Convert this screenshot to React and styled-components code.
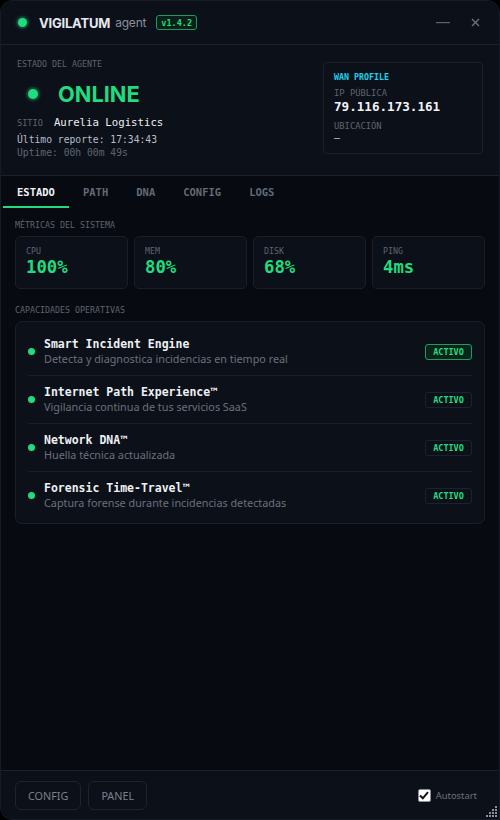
import React from "react";
import styled, { createGlobalStyle } from "styled-components";

const GlobalStyle = createGlobalStyle`
  html, body { margin: 0; padding: 0; background: #000; }
  body { font-family: "Noto Sans", sans-serif; }
  * { box-sizing: border-box; }
`;

const MONO = `"DejaVu Sans Mono", "Liberation Mono", monospace`;
const SANS = `"Noto Sans", "Open Sans", sans-serif`;
const INTER = `Inter, "Noto Sans", sans-serif`;
const GREEN = "#21dc7e";

const Window = styled.div`
  width: 500px;
  height: 820px;
  display: flex;
  flex-direction: column;
  background: #070a10;
  border: 1px solid #161b26;
  border-radius: 12px 12px 0 12px;
  overflow: hidden;
  position: relative;
`;

const TitleBar = styled.div`
  height: 44px;
  flex: none;
  display: flex;
  align-items: center;
  padding: 0 9px 0 17px;
  background: #0c1019;
  border-bottom: 1px solid #1b202c;
`;

const Led = styled.span`
  width: ${p => p.$size}px;
  height: ${p => p.$size}px;
  border-radius: 50%;
  background: ${GREEN};
  box-shadow: 0 0 0 ${p => p.$ring}px rgba(33, 220, 126, 0.18), 0 0 6px rgba(33, 220, 126, 0.35);
  flex: none;
`;

const Brand = styled.span`
  margin-left: 12px;
  font-family: ${INTER};
  font-weight: 700;
  font-size: 13px;
  letter-spacing: -0.2px;
  color: #e6e8ee;
`;

const BrandSub = styled.span`
  margin-left: 5px;
  font-family: ${INTER};
  font-weight: 400;
  font-size: 12px;
  letter-spacing: -0.2px;
  color: #8a909c;
`;

const Version = styled.span`
  margin-left: 10px;
  height: 15px;
  padding: 0 4px;
  display: flex;
  align-items: center;
  border: 1px solid #1c9a5c;
  border-radius: 3px;
  background: #0a1f17;
  font-family: ${MONO};
  font-weight: 700;
  font-size: 8.5px;
  color: ${GREEN};
`;

const Spacer = styled.div`
  flex: 1;
`;

const WinButton = styled.button`
  width: 30px;
  height: 30px;
  margin-left: 2px;
  border: 0;
  background: transparent;
  display: flex;
  align-items: center;
  justify-content: center;
  padding: 0;
  cursor: pointer;
`;

const Header = styled.div`
  height: 131px;
  flex: none;
  display: flex;
  justify-content: space-between;
  align-items: flex-start;
  padding: 13px 16px 0 16px;
  background: #0c1019;
  border-bottom: 1px solid #1b202c;
`;

const Column = styled.div`
  display: flex;
  flex-direction: column;
`;

const Caption = styled.div`
  font-family: ${MONO};
  font-size: ${p => p.$size || 8.3}px;
  line-height: 12px;
  color: #5d6471;
  text-transform: uppercase;
  margin-top: ${p => p.$mt || 0}px;
`;

const StatusRow = styled.div`
  margin-top: 10px;
  height: 28px;
  display: flex;
  align-items: center;
  padding-left: 11px;
`;

const StatusText = styled.span`
  margin-left: 20px;
  font-family: ${INTER};
  font-weight: 700;
  font-size: 21.8px;
  color: ${GREEN};
`;

const SiteRow = styled.div`
  margin-top: 9px;
  display: flex;
  align-items: baseline;
  gap: 11px;
  line-height: 12px;
`;

const SiteName = styled.span`
  font-family: ${MONO};
  font-size: 10.7px;
  color: #eceef2;
`;

const MonoLine = styled.div`
  font-family: ${MONO};
  font-size: 9.7px;
  line-height: 13px;
  color: ${p => (p.$dim ? "#5f6672" : "#b9bec8")};
  margin-top: ${p => p.$mt || 0}px;
`;

const WanCard = styled.div`
  margin-top: 4px;
  width: 160px;
  height: 92px;
  border: 1px solid #1b202c;
  border-radius: 4px;
  padding: 8px 10px;
  display: flex;
  flex-direction: column;
`;

const WanTitle = styled.div`
  font-family: ${MONO};
  font-weight: 700;
  font-size: 8.3px;
  line-height: 12px;
  color: #22cfe8;
`;

const IpValue = styled.div`
  font-family: ${MONO};
  font-weight: 700;
  font-size: 12.6px;
  line-height: 16px;
  color: #f1f3f6;
`;

const Dash = styled.div`
  font-family: ${MONO};
  font-size: 10px;
  line-height: 12px;
  color: #c3c7cf;
`;

const Tabs = styled.div`
  height: 32px;
  flex: none;
  display: flex;
  padding-left: 2px;
`;

const Tab = styled.div`
  padding: 1px 14px 0;
  display: flex;
  align-items: center;
  font-family: ${MONO};
  font-weight: 700;
  font-size: 10.5px;
  color: ${p => (p.$active ? "#f0f2f5" : "#626977")};
  border-bottom: 2px solid ${p => (p.$active ? GREEN : "transparent")};
`;

const Body = styled.div`
  flex: 1;
  padding: 11px 14px 0 14px;
  display: flex;
  flex-direction: column;
`;

const Metrics = styled.div`
  margin-top: 5px;
  display: grid;
  grid-template-columns: repeat(4, 1fr);
  gap: 6px;
`;

const MetricCard = styled.div`
  height: 53px;
  background: #0c1019;
  border: 1px solid #191e2a;
  border-radius: 5px;
  padding: 8px 10px;
`;

const MetricValue = styled.div`
  font-family: ${MONO};
  font-weight: 700;
  font-size: 17.3px;
  line-height: 20px;
  color: ${GREEN};
`;

const CapCard = styled.div`
  margin-top: 5px;
  background: #0c1019;
  border: 1px solid #191e2a;
  border-radius: 7px;
  padding: 6px 12px 4px 12px;
`;

const CapRow = styled.div`
  display: flex;
  align-items: center;
  padding: 9px 0;
  border-bottom: ${p => (p.$last ? "0" : "1px solid #191e2a")};
`;

const CapDot = styled.span`
  width: 7px;
  height: 7px;
  border-radius: 50%;
  background: ${GREEN};
  flex: none;
`;

const CapText = styled.div`
  margin-left: 9px;
  flex: 1;
  display: flex;
  flex-direction: column;
`;

const CapTitle = styled.div`
  font-family: ${MONO};
  font-weight: 700;
  font-size: 11.5px;
  line-height: 14px;
  color: #eef0f4;
`;

const CapDesc = styled.div`
  font-family: ${SANS};
  font-size: 10.8px;
  line-height: 15px;
  color: #6a717e;
`;

const Badge = styled.span`
  width: 47px;
  height: 16px;
  flex: none;
  display: flex;
  align-items: center;
  justify-content: center;
  border: 1px solid ${p => (p.$hl ? "#1f9d5f" : "#1b2130")};
  background: ${p => (p.$hl ? "#0a2419" : "transparent")};
  border-radius: 3px;
  font-family: ${MONO};
  font-weight: 700;
  font-size: 8.5px;
  color: ${GREEN};
`;

const Footer = styled.div`
  height: 49px;
  flex: none;
  display: flex;
  align-items: center;
  padding: 0 22px 0 14px;
  gap: 7px;
  background: #0c1019;
  border-top: 1px solid #1b202c;
`;

const FooterButton = styled.button`
  height: 29px;
  padding: 0 12px;
  background: transparent;
  border: 1px solid #1d2330;
  border-radius: 6px;
  font-family: ${SANS};
  font-size: 10.8px;
  color: #7b818d;
  cursor: pointer;
`;

const CheckLabel = styled.label`
  margin-left: auto;
  display: flex;
  align-items: center;
  gap: 5px;
  font-family: ${SANS};
  font-size: 9.4px;
  color: #6a717e;
`;

const CheckBox = styled.span`
  width: 13px;
  height: 13px;
  background: #fff;
  border: 1px solid #8a8f99;
  border-radius: 2px;
  display: flex;
  align-items: center;
  justify-content: center;
`;

const Grip = styled.svg`
  position: absolute;
  right: 2px;
  bottom: 2px;
`;

const capabilities = [
  ["Smart Incident Engine", "Detecta y diagnostica incidencias en tiempo real"],
  ["Internet Path Experience™", "Vigilancia continua de tus servicios SaaS"],
  ["Network DNA™", "Huella técnica actualizada"],
  ["Forensic Time-Travel™", "Captura forense durante incidencias detectadas"],
];

const metrics = [
  ["CPU", "100%"],
  ["MEM", "80%"],
  ["DISK", "68%"],
  ["PING", "4ms"],
];

const tabs = ["ESTADO", "PATH", "DNA", "CONFIG", "LOGS"];

export default function App() {
  return (
    <>
      <GlobalStyle />
      <Window>
        <TitleBar>
          <Led $size={9} $ring={2} />
          <Brand>VIGILATUM</Brand>
          <BrandSub>agent</BrandSub>
          <Version>v1.4.2</Version>
          <Spacer />
          <WinButton aria-label="minimize">
            <svg width="14" height="2" viewBox="0 0 14 2">
              <rect x="0" y="0" width="14" height="1.2" fill="#5d6471" />
            </svg>
          </WinButton>
          <WinButton aria-label="close">
            <svg width="9" height="9" viewBox="0 0 9 9">
              <path d="M1 1 L8 8 M8 1 L1 8" stroke="#6a717e" strokeWidth="1.4" />
            </svg>
          </WinButton>
        </TitleBar>

        <Header>
          <Column>
            <Caption>Estado del agente</Caption>
            <StatusRow>
              <Led $size={10} $ring={2} />
              <StatusText>ONLINE</StatusText>
            </StatusRow>
            <SiteRow>
              <Caption $size={8.6}>Sitio</Caption>
              <SiteName>Aurelia Logistics</SiteName>
            </SiteRow>
            <MonoLine $mt={4}>Último reporte: 17:34:43</MonoLine>
            <MonoLine $dim>Uptime: 00h 00m 49s</MonoLine>
          </Column>
          <WanCard>
            <WanTitle>WAN PROFILE</WanTitle>
            <Caption $size={8.8} $mt={4}>IP Pública</Caption>
            <IpValue>79.116.173.161</IpValue>
            <Caption $size={8.8} $mt={5}>Ubicación</Caption>
            <Dash>—</Dash>
          </WanCard>
        </Header>

        <Tabs>
          {tabs.map((t, i) => (
            <Tab key={t} $active={i === 0}>{t}</Tab>
          ))}
        </Tabs>

        <Body>
          <Caption>Métricas del sistema</Caption>
          <Metrics>
            {metrics.map(([k, v]) => (
              <MetricCard key={k}>
                <Caption>{k}</Caption>
                <MetricValue>{v}</MetricValue>
              </MetricCard>
            ))}
          </Metrics>

          <Caption $mt={15}>Capacidades operativas</Caption>
          <CapCard>
            {capabilities.map(([title, desc], i) => (
              <CapRow key={title} $last={i === capabilities.length - 1}>
                <CapDot />
                <CapText>
                  <CapTitle>{title}</CapTitle>
                  <CapDesc>{desc}</CapDesc>
                </CapText>
                <Badge $hl={i === 0}>ACTIVO</Badge>
              </CapRow>
            ))}
          </CapCard>
        </Body>

        <Footer>
          <FooterButton>CONFIG</FooterButton>
          <FooterButton>PANEL</FooterButton>
          <CheckLabel>
            <CheckBox>
              <svg width="10" height="9" viewBox="0 0 10 9">
                <path d="M1 4.5 L3.8 7.3 L9 1.2" fill="none" stroke="#111" strokeWidth="2" />
              </svg>
            </CheckBox>
            Autostart
          </CheckLabel>
        </Footer>

        <Grip width="11" height="11" viewBox="0 0 11 11">
          {[
            [9, 0], [9, 3], [6, 3], [9, 6], [6, 6], [3, 6], [9, 9], [6, 9], [3, 9], [0, 9],
          ].map(([x, y]) => (
            <rect key={`${x}-${y}`} x={x} y={y} width="2" height="2" fill="#8a909c" />
          ))}
        </Grip>
      </Window>
    </>
  );
}
